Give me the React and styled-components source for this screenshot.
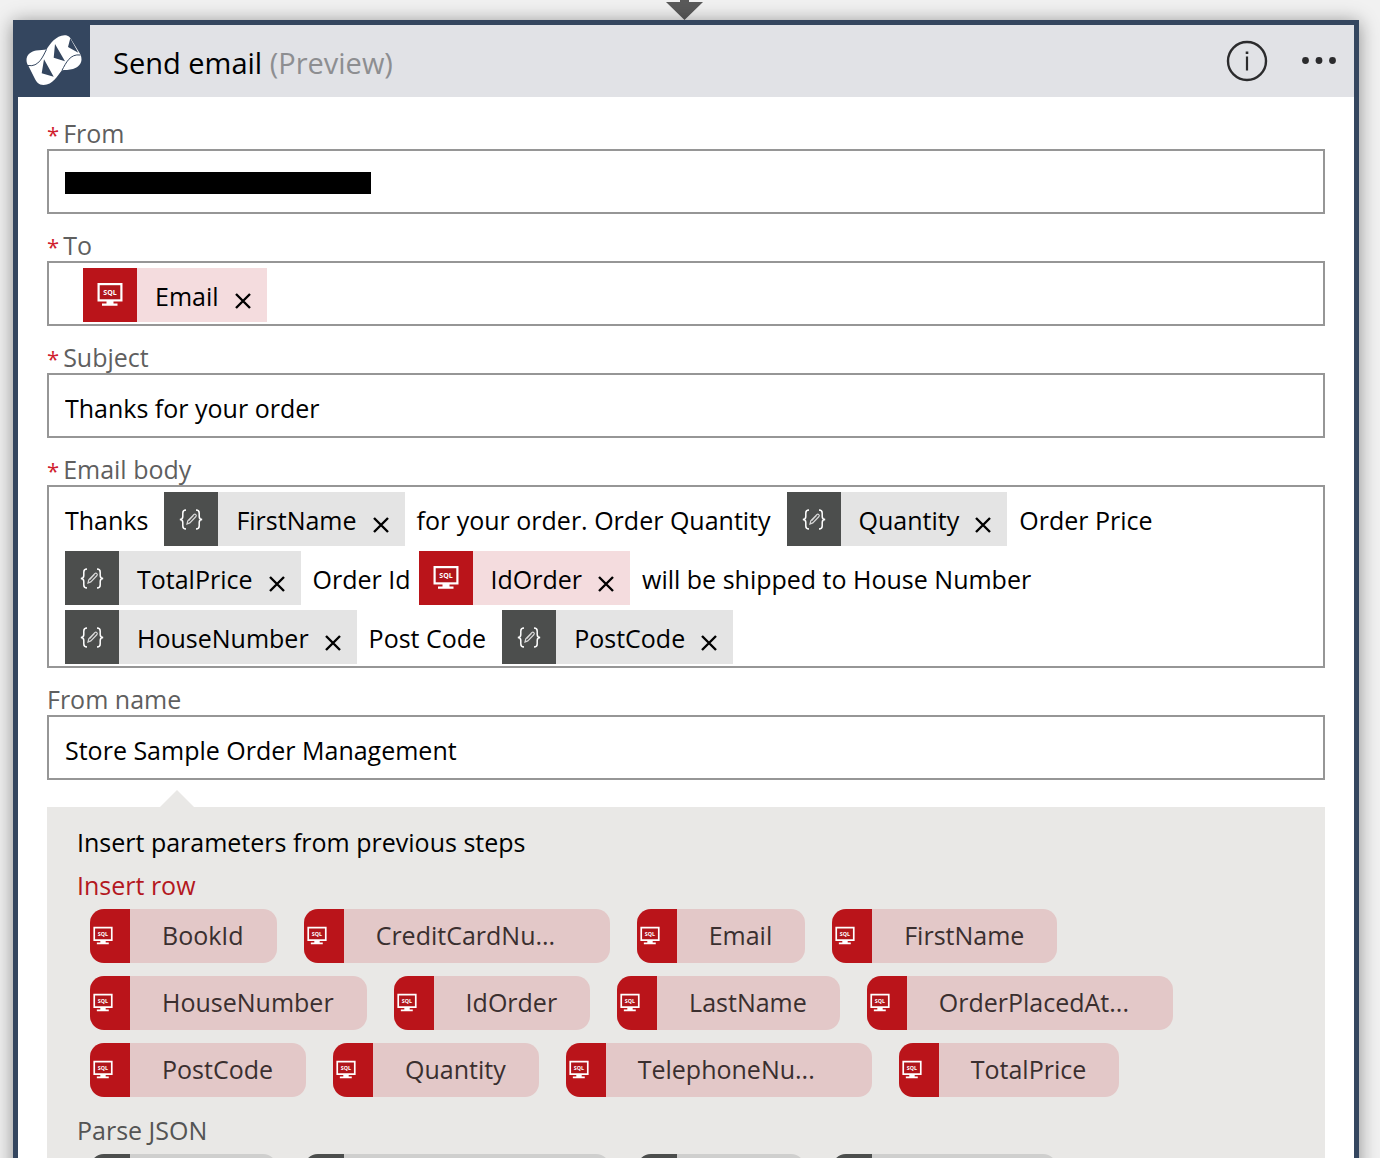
import React from "react";
import styled, { createGlobalStyle, css } from "styled-components";

const GlobalStyle = createGlobalStyle`
  *, *::before, *::after { box-sizing: border-box; }
  body {
    margin: 0;
    background: #f1f1f1;
    color: #000;
    font-family: "Open Sans", "Liberation Sans", sans-serif;
    font-size: 25px;
    line-height: 32px;
  }
  button, input { font: inherit; color: inherit; }
  button { margin: 0; padding: 0; border: 0; background: none; cursor: pointer; }
`;

const Page = styled.main`
  display: flex;
  flex-direction: column;
  height: 100vh;
  padding: 0 21px 0 13px;
  overflow: hidden;
`;

const Connector = styled.svg`
  display: block;
  flex: none;
  align-self: center;
  width: 40px;
  height: 20px;
`;

const Card = styled.section`
  flex: none;
  border: 5px solid #34465f;
  background: #fff;
  box-shadow: 0 2px 18px rgba(0, 0, 0, 0.42);
`;

const Header = styled.header`
  display: flex;
  align-items: center;
  height: 72px;
  padding-right: 14px;
  background: #e1e2e6;
`;

const Logo = styled.div`
  display: grid;
  place-items: center;
  width: 72px;
  height: 72px;
  margin-right: 23px;
  background: #34465f;
`;

const Title = styled.h1`
  flex: 1;
  margin: 0;
  padding-top: 4px;
  font-size: 29px;
  font-weight: 400;
  line-height: 40px;
`;

const Muted = styled.span`
  color: #8d8e91;
`;

const HeaderButton = styled.button`
  display: grid;
  place-items: center;
  width: 42px;
  height: 42px;
  margin-left: 30px;
`;

const Form = styled.form`
  padding: 5px 29px 40px;
`;

const Label = styled.label`
  display: block;
  margin-top: 15px;
  color: #5f5f5f;
`;

const Star = styled.span`
  margin-right: 4px;
  color: #d0202e;
  font-size: 22px;
  line-height: 24px;
`;

const fieldBox = css`
  width: 100%;
  min-height: 65px;
  border: 2px solid #969696;
  border-radius: 0;
  background: #fff;
`;

const TextInput = styled.input`
  ${fieldBox}
  display: block;
  padding: 4px 16px 0;
`;

const TokenField = styled.div`
  ${fieldBox}
  display: flex;
  flex-wrap: wrap;
  align-items: center;
  gap: 5px 8px;
  padding: ${(p) => (p.$indent ? "4px 16px 2px 34px" : "5px 16px 2px")};
`;

const Redacted = styled.span`
  width: 306px;
  height: 22px;
  background: #000;
`;

const Run = styled.span`
  margin-right: ${(p) => (p.$tight ? 0 : 8)}px;
  padding-top: 2px;
`;

const Token = styled.span`
  display: inline-flex;
  align-items: center;
  height: 54px;
  margin-right: 4px;
  padding-right: 15px;
  background: ${(p) => (p.$kind === "sql" ? "#f4dcde" : "#e4e4e4")};
`;

const TokenIcon = styled.span`
  display: grid;
  place-items: center;
  width: 54px;
  height: 54px;
  margin-right: 18px;
  background: ${(p) => (p.$kind === "sql" ? "#ba141a" : "#4c4e4d")};
`;

const TokenName = styled.span`
  padding-top: 2px;
`;

const Remove = styled.button`
  display: grid;
  place-items: center;
  width: 18px;
  height: 18px;
  margin: 12px 0 0 15px;
`;

const Pointer = styled.div`
  width: 0;
  margin: 10px 0 0 113px;
  border: solid transparent;
  border-width: 0 17px 17px;
  border-bottom-color: #e9e8e6;
`;

const Panel = styled.section`
  padding: 19px 0 40px 30px;
  background: #e9e8e6;
`;

const PanelTitle = styled.h2`
  margin: 0 0 11px;
  font-size: 25px;
  font-weight: 400;
`;

const GroupTitle = styled.h3`
  margin: 0;
  color: ${(p) => (p.$kind === "sql" ? "#b4181f" : "#545454")};
  font-size: 25px;
  font-weight: 400;
`;

const Chips = styled.div`
  display: flex;
  flex-wrap: wrap;
  gap: 13px 27px;
  margin: 8px 0 17px;
  padding-left: 13px;
`;

const Chip = styled.button`
  display: flex;
  align-items: center;
  height: 54px;
  width: ${(p) => (p.$long ? "306px" : "auto")};
  padding-right: 33px;
  overflow: hidden;
  border-radius: 14px;
  background: ${(p) => (p.$kind === "sql" ? "#e3c8c8" : "#cfcfce")};
  color: #3a2f2f;
`;

const ChipIcon = styled.span`
  display: flex;
  align-items: center;
  width: 40px;
  height: 54px;
  margin-right: 32px;
  padding-left: 3px;
  background: ${(p) => (p.$kind === "sql" ? "#ba141a" : "#4c4e4d")};
`;

const ChipName = styled.span`
  padding-bottom: 2px;
  line-height: 28px;
`;

const SqlIcon = ({ size }) => (
  <svg width={size} height={size} viewBox="0 0 26 26" aria-hidden="true">
    <path d="M0.5 1h25v18.500h-25z" fill="#fff" />
    <path d="M2.700 3.200h20.600v14.100h-20.600z" fill="#b0151b" />
    <path d="M9.500 19h7v2.600h4v2.200H5v-2.200h4.500z" fill="#fff" />
    <text
      x="13"
      y="13"
      textAnchor="middle"
      fontFamily="Open Sans, sans-serif"
      fontSize="7"
      fontWeight="700"
      fill="#fff"
    >
      SQL
    </text>
  </svg>
);

const JsonIcon = ({ size }) => (
  <svg
    width={size}
    height={size}
    viewBox="0 -1 26 26"
    fill="none"
    stroke="#fff"
    strokeWidth="1.500"
    aria-hidden="true"
  >
    <path d="M8 3C5.500 3 4.800 4 4.800 6v3.500c0 2-.8 3-3 3 2.200 0 3 1 3 3V19c0 2 .7 3 3.200 3" />
    <path d="M18 3c2.500 0 3.200 1 3.200 3v3.500c0 2 .8 3 3 3-2.200 0-3 1-3 3V19c0 2-.7 3-3.200 3" />
    <path
      d="M9 17l.8-3.200 6.200-6.300c1.200-1 3 .7 2 2l-6.200 6.400zM15.300 8.700l-4.600 5"
      stroke="#d8d8d8"
      strokeWidth="1.200"
    />
  </svg>
);

const KindIcon = ({ kind, size }) =>
  kind === "sql" ? <SqlIcon size={size} /> : <JsonIcon size={size} />;

const LogoIcon = () => (
  <svg width="56" height="52" viewBox="0 0 56 52" aria-hidden="true">
    <path
      d="M0.500 25C0.500 20 4.500 16.500 10 15.500C14 15 18 15 20.500 14.500C24 9 30 .5 38.500 .3C43 .3 44.500 3 46.500 6.500L54.500 19.500C57.500 27 53.500 32 47 34C43 35 39 35 36 35.300C31 41 27 50 17.500 50C12.500 50 10.500 47 8.500 43L2.500 31C1 29 .5 27 .5 25z"
      fill="#fff"
    />
    <path
      d="M2 30.500C13 32.500 17 21 20.500 14.500M36 35.300C40 28 44 18.500 54.500 20"
      fill="none"
      stroke="#34465f"
      strokeWidth="1"
    />
    <path
      d="M18 24.300L15.700 38.300l12 3.400zM29 9l-1.300 13.700 11.300 3.600zM44.300 3.300L42 12l10.300 5.700z"
      fill="#34465f"
    />
  </svg>
);

const TokenChip = ({ kind, name }) => (
  <Token $kind={kind}>
    <TokenIcon $kind={kind}>
      <KindIcon kind={kind} size={26} />
    </TokenIcon>
    <TokenName>{name}</TokenName>
    <Remove type="button" aria-label={`Remove ${name}`}>
      <svg width="18" height="18" viewBox="0 0 18 18" stroke="#000" strokeWidth="2.400">
        <path d="M2 2l14 14M16 2L2 16" />
      </svg>
    </Remove>
  </Token>
);

const FieldLabel = ({ required, children, ...rest }) => (
  <Label {...rest}>
    {required && <Star>*</Star>}
    {children}
  </Label>
);

const emailBody = [
  { text: "Thanks" },
  { kind: "json", name: "FirstName" },
  { text: "for your order. Order Quantity" },
  { kind: "json", name: "Quantity" },
  { text: "Order Price" },
  { kind: "json", name: "TotalPrice" },
  { text: "Order Id", tight: true },
  { kind: "sql", name: "IdOrder" },
  { text: "will be shipped to House Number" },
  { kind: "json", name: "HouseNumber" },
  { text: "Post Code" },
  { kind: "json", name: "PostCode" },
];

const groups = [
  {
    kind: "sql",
    title: "Insert row",
    names: [
      "BookId",
      "CreditCardNu...",
      "Email",
      "FirstName",
      "HouseNumber",
      "IdOrder",
      "LastName",
      "OrderPlacedAt...",
      "PostCode",
      "Quantity",
      "TelephoneNu...",
      "TotalPrice",
    ],
  },
  {
    kind: "json",
    title: "Parse JSON",
    names: ["BookId", "CreditCardNu...", "Email", "FirstName"],
  },
];

export default function App() {
  return (
    <>
      <GlobalStyle />
      <Page>
        <Connector viewBox="0 0 40 20" aria-hidden="true">
          <path d="M14 0h9v2h14L18.500 20 0 2h14z" fill="#5a5a5a" />
        </Connector>
        <Card>
          <Header>
            <Logo>
              <LogoIcon />
            </Logo>
            <Title>
              Send email <Muted>(Preview)</Muted>
            </Title>
            <HeaderButton type="button" aria-label="Information">
              <svg width="42" height="42" viewBox="0 0 42 42" fill="#2b2b2d">
                <circle cx="21" cy="21" r="19" fill="none" stroke="#2b2b2d" strokeWidth="2.400" />
                <path d="M19.900 16.500h2.200v14h-2.200zM19.700 11.500h2.600v2.600h-2.600z" />
              </svg>
            </HeaderButton>
            <HeaderButton type="button" aria-label="More options">
              <svg width="42" height="42" viewBox="0 0 42 42" fill="#2b2b2d">
                <circle cx="7.500" cy="20.500" r="3.400" />
                <circle cx="21" cy="20.500" r="3.400" />
                <circle cx="34.500" cy="20.500" r="3.400" />
              </svg>
            </HeaderButton>
          </Header>
          <Form>
            <FieldLabel as="div" id="from-label" required>
              From
            </FieldLabel>
            <TokenField role="textbox" tabIndex={0} aria-labelledby="from-label">
              <Redacted />
            </TokenField>

            <FieldLabel as="div" id="to-label" required>
              To
            </FieldLabel>
            <TokenField $indent role="textbox" tabIndex={0} aria-labelledby="to-label">
              <TokenChip kind="sql" name="Email" />
            </TokenField>

            <FieldLabel htmlFor="subject" required>
              Subject
            </FieldLabel>
            <TextInput id="subject" type="text" defaultValue="Thanks for your order" />

            <FieldLabel as="div" id="body-label" required>
              Email body
            </FieldLabel>
            <TokenField
              role="textbox"
              tabIndex={0}
              aria-multiline="true"
              aria-labelledby="body-label"
            >
              {emailBody.map((part, i) =>
                part.text ? (
                  <Run key={i} $tight={part.tight}>
                    {part.text}
                  </Run>
                ) : (
                  <TokenChip key={i} kind={part.kind} name={part.name} />
                )
              )}
            </TokenField>

            <FieldLabel htmlFor="from-name">From name</FieldLabel>
            <TextInput id="from-name" type="text" defaultValue="Store Sample Order Management" />

            <Pointer />
            <Panel>
              <PanelTitle>Insert parameters from previous steps</PanelTitle>
              {groups.map((group) => (
                <React.Fragment key={group.title}>
                  <GroupTitle $kind={group.kind}>{group.title}</GroupTitle>
                  <Chips>
                    {group.names.map((name) => (
                      <Chip
                        key={name}
                        type="button"
                        $kind={group.kind}
                        $long={name.endsWith("...")}
                      >
                        <ChipIcon $kind={group.kind}>
                          <KindIcon kind={group.kind} size={20} />
                        </ChipIcon>
                        <ChipName>{name}</ChipName>
                      </Chip>
                    ))}
                  </Chips>
                </React.Fragment>
              ))}
            </Panel>
          </Form>
        </Card>
      </Page>
    </>
  );
}
